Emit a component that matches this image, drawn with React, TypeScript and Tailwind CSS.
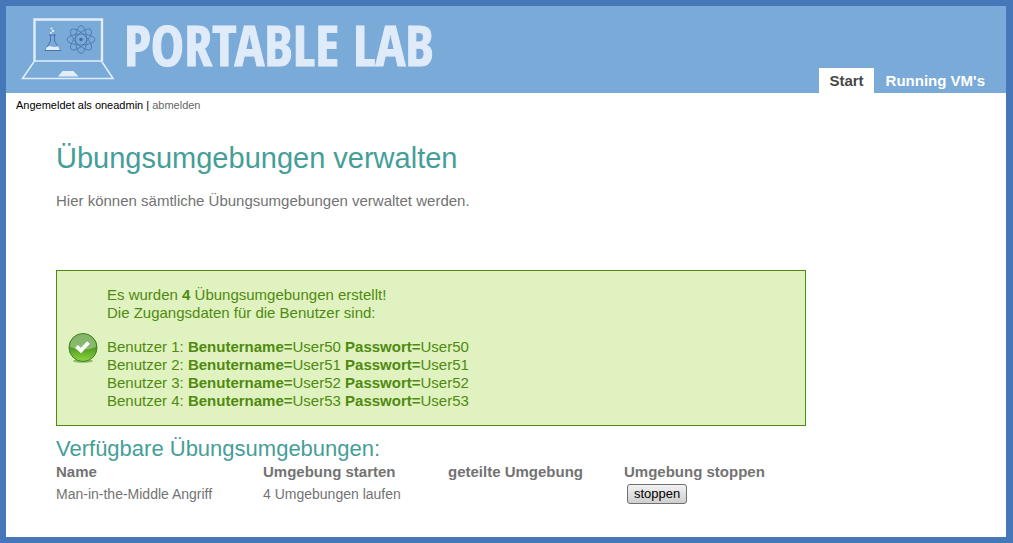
const users = [
  { id: 1, name: 'User50', password: 'User50' },
  { id: 2, name: 'User51', password: 'User51' },
  { id: 3, name: 'User52', password: 'User52' },
  { id: 4, name: 'User53', password: 'User53' },
];

function LaptopLogo() {
  return (
    <svg className="h-16 w-24 shrink-0" viewBox="20 16 96 64" fill="none" aria-hidden="true">
      <path d="M34.500 61V19.500H102V61" stroke="#e2edfa" strokeWidth="2.400" />
      <path d="M34.500 61H101.500L113 78.500H22.500L34.500 61Z" stroke="#e2edfa" strokeWidth="1.600" />
      <path d="M58 76.500L62.500 71H73.500L78.500 76.500Z" fill="#e2edfa" />
      <path d="M49 35H56M50.500 35V41L45 50.500H60.500L54.500 41V35" stroke="#426da5" strokeWidth="0.900" />
      <path d="M46.500 47.500Q49 45.500 52 46.500T58 46L60 50H45.500Z" fill="#e2edfa" />
      <g fill="#e2edfa">
        <circle cx="51.500" cy="28.500" r="1" />
        <circle cx="53" cy="31" r="1.200" />
        <circle cx="51" cy="33" r="1" />
      </g>
      <g stroke="#426da5" strokeWidth="0.700">
        <ellipse cx="81" cy="39.500" rx="14" ry="5.500" />
        <ellipse cx="81" cy="39.500" rx="14" ry="5.500" transform="rotate(45 81 39.500)" />
        <ellipse cx="81" cy="39.500" rx="14" ry="5.500" transform="rotate(90 81 39.500)" />
        <ellipse cx="81" cy="39.500" rx="14" ry="5.500" transform="rotate(135 81 39.500)" />
      </g>
      <circle cx="81" cy="39.500" r="1.800" fill="#426da5" />
    </svg>
  );
}

function SuccessIcon() {
  return (
    <svg className="size-8 shrink-0" viewBox="0 0 32 32" aria-hidden="true">
      <defs>
        <linearGradient id="ball" x1="0" y1="0" x2="0" y2="1">
          <stop offset="0" stopColor="#5a9a35" />
          <stop offset="0.500" stopColor="#4f9a26" />
          <stop offset="1" stopColor="#8fd63c" />
        </linearGradient>
        <linearGradient id="gloss" x1="0" y1="0" x2="0" y2="1">
          <stop offset="0" stopColor="#fff" stopOpacity="0.250" />
          <stop offset="1" stopColor="#fff" stopOpacity="0.350" />
        </linearGradient>
      </defs>
      <ellipse cx="16" cy="29" rx="10" ry="1.800" fill="#8fb86b" />
      <circle cx="16" cy="15.500" r="14" fill="url(#ball)" stroke="#3f7f22" />
      <path d="M3 15A13 13 0 0 1 29 15Q16 20 3 15Z" fill="url(#gloss)" />
      <path d="M9.500 14.500L14 18.500L21.500 10.500" fill="none" stroke="#fff" strokeWidth="3.800" />
    </svg>
  );
}

export default function App() {
  return (
    <div className="min-h-screen border-6 border-r-7 border-[#4677b8] bg-white font-['Liberation_Sans',Arial,sans-serif] text-[15px] leading-[18px] text-[#737373]">
      <header className="flex h-[87px] items-stretch justify-between bg-[#7aaad8] pr-[10px] pl-[14px]">
        <div className="flex items-start gap-2 pt-[10px]">
          <LaptopLogo />
          <span className="font-['Open_Sans_Condensed','Noto_Sans_Condensed','Roboto_Condensed','Liberation_Sans_Narrow',sans-serif] text-[56px] leading-none font-bold whitespace-nowrap text-[#e0ebfa] [-webkit-text-stroke:1px_#e0ebfa]">
            PORTABLE LAB
          </span>
        </div>
        <nav className="flex items-end font-bold">
          <a href="#start" className="bg-white px-[10px] pt-1 pb-[3px] text-[#484848]">Start</a>
          <a href="#vms" className="pt-1 pr-[11px] pb-[3px] pl-3 text-white">Running VM's</a>
        </nav>
      </header>

      <p className="px-[10px] pt-1 text-[11px] leading-4 text-black">
        Angemeldet als oneadmin | <a href="#logout" className="text-[#666]">abmelden</a>
      </p>

      <main className="px-[50px] pt-[27px] pb-6">
        <h1 className="text-[29px] leading-9 text-[#459e97]">Übungsumgebungen verwalten</h1>
        <p className="mt-4">Hier können sämtliche Übungsumgebungen verwaltet werden.</p>

        <section className="mt-[60px] flex max-w-[750px] items-center gap-2 border border-[#4f8a10] bg-[#dff2bf] py-[15px] pl-[10px] text-[#4f8a10]">
          <SuccessIcon />
          <div>
            <p>Es wurden <b>4</b> Übungsumgebungen erstellt!</p>
            <p>Die Zugangsdaten für die Benutzer sind:</p>
            <ul className="mt-4">
              {users.map((u) => (
                <li key={u.id}>
                  Benutzer {u.id}: <b>Benutername=</b>{u.name} <b>Passwort=</b>{u.password}
                </li>
              ))}
            </ul>
          </div>
        </section>

        <h2 className="mt-[9px] text-[22px] leading-7 text-[#459e97]">Verfügbare Übungsumgebungen:</h2>
        <table className="text-left">
          <thead>
            <tr>
              <th className="w-[207px]">Name</th>
              <th className="w-[185px]">Umgebung starten</th>
              <th className="w-[176px]">geteilte Umgebung</th>
              <th>Umgebung stoppen</th>
            </tr>
          </thead>
          <tbody className="text-[14px]">
            <tr>
              <td className="pt-[3px]">Man-in-the-Middle Angriff</td>
              <td className="pt-[3px]">4 Umgebungen laufen</td>
              <td></td>
              <td className="px-[3px] pt-[3px]">
                <button type="button" className="block h-5 rounded-[3px] border border-[#707070] bg-linear-to-b from-[#f2f2f2] to-[#cfcfcf] px-[6px] text-[13px] leading-[18px] text-black">
                  stoppen
                </button>
              </td>
            </tr>
          </tbody>
        </table>
      </main>
    </div>
  );
}
